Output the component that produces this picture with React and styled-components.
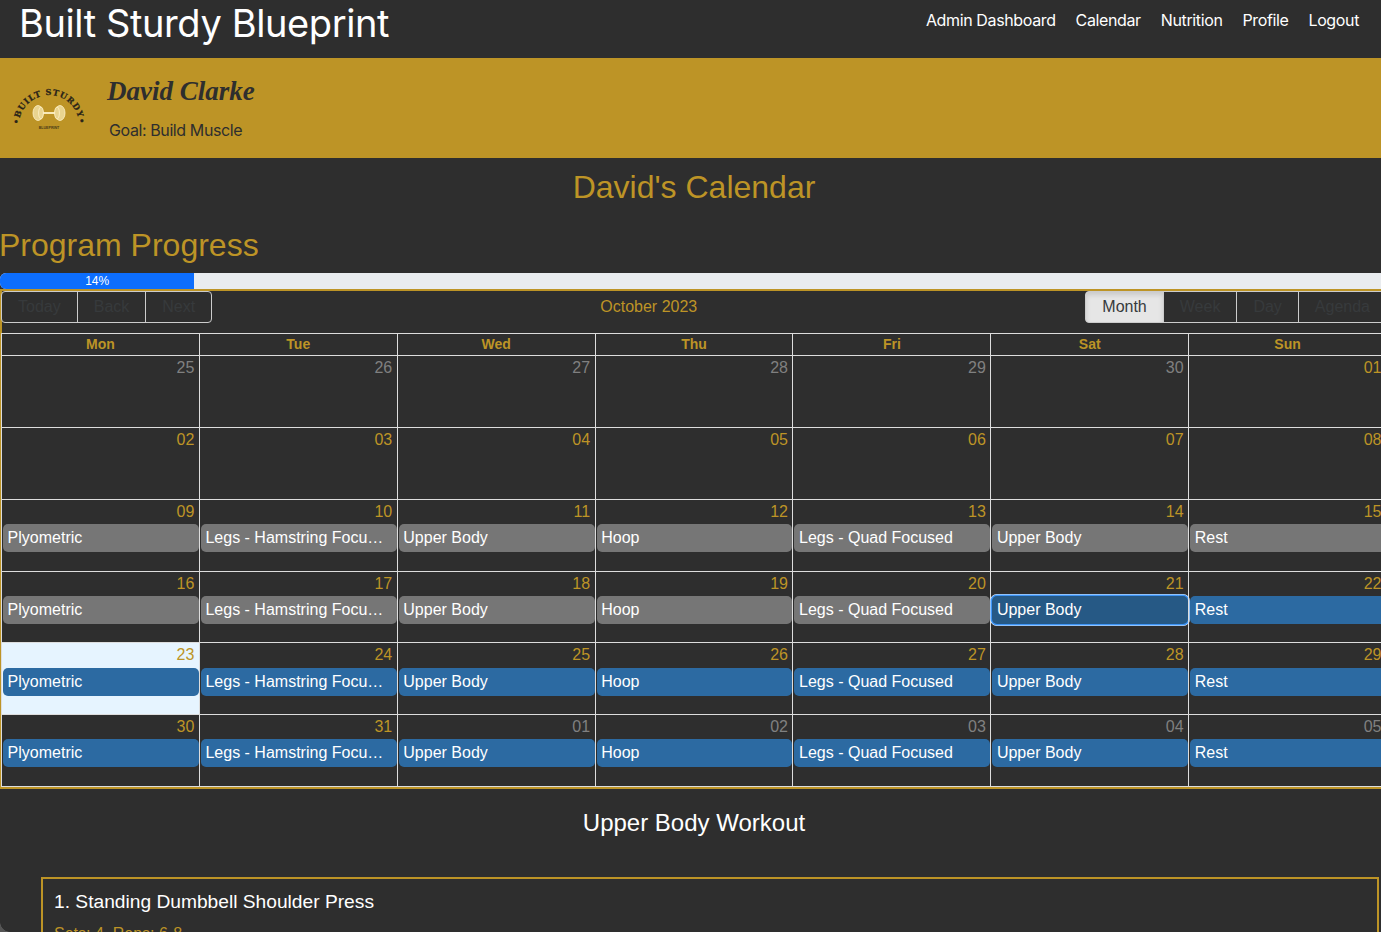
import React from 'react'
import styled, { createGlobalStyle } from 'styled-components'

const gold = '#bd9426'
const dark = '#2e2e2e'
const line = '#dddddd'
const ui = '"Inter", "Liberation Sans", sans-serif'
const arial = '"Liberation Sans", Arial, sans-serif'

const Global = createGlobalStyle`
  html, body {
    margin: 0;
    padding: 0;
    width: 1381px;
    height: 932px;
    overflow: hidden;
    background: ${dark};
  }
  * { box-sizing: border-box; }
`

const Page = styled.div`
  position: relative;
  width: 1381px;
  height: 932px;
  overflow: hidden;
  background: ${dark};
  font-family: ${ui};
`

const TopBar = styled.header`
  height: 58px;
  display: flex;
  align-items: flex-start;
  justify-content: space-between;
  padding: 0 22px 0 19px;
`

const Brand = styled.div`
  font-size: 38px;
  line-height: 47px;
  font-weight: 400;
  letter-spacing: -0.4px;
  color: #fff;
`

const Nav = styled.nav`
  display: flex;
  gap: 20px;
  padding-top: 11px;
  a {
    color: #fff;
    font-size: 16px;
    line-height: 19px;
    letter-spacing: -0.37px;
    text-decoration: none;
  }
`

const Banner = styled.section`
  height: 100px;
  background: ${gold};
  display: flex;
  padding-left: 12px;
`

const LogoWrap = styled.div`
  width: 75px;
  height: 100px;
  margin-right: 21px;
  flex: none;
`

const Athlete = styled.div`
  display: flex;
  flex-direction: column;
  color: ${dark};
`

const Name = styled.div`
  font-family: "Liberation Serif", serif;
  font-style: italic;
  font-weight: 700;
  font-size: 27px;
  line-height: 34px;
  margin: 16px 0 0 -1px;
`

const Goal = styled.div`
  font-size: 16px;
  line-height: 19px;
  letter-spacing: -0.4px;
  margin: 13px 0 0 1px;
`

const Wide = styled.main`
  width: 1388px;
  font-family: ${arial};
`

const CalendarTitle = styled.h2`
  margin: 0;
  padding-top: 10px;
  height: 70px;
  text-align: center;
  color: ${gold};
  font-size: 32px;
  line-height: 39px;
  font-weight: 400;
`

const ProgressTitle = styled.h2`
  margin: 0 0 0 -1px;
  height: 45px;
  color: ${gold};
  font-size: 32px;
  line-height: 35px;
  font-weight: 400;
`

const Progress = styled.div`
  height: 16px;
  width: 100%;
  background: #e9ecef;
  border-radius: 6px 0 0 6px;
  overflow: hidden;
  display: flex;
`

const ProgressFill = styled.div`
  background: #0d6efd;
  color: #fff;
  font-size: 12px;
  line-height: 16px;
  text-align: center;
`

const Calendar = styled.section`
  height: 500px;
  width: 1387px;
  border: 2px solid ${gold};
  border-right: none;
`

const Toolbar = styled.div`
  display: flex;
  align-items: center;
  height: 32px;
  margin-bottom: 10px;
  margin-left: -1px;
`

const ToolLabel = styled.span`
  flex: 1;
  text-align: center;
  color: ${gold};
  font-size: 16px;
`

const BtnGroup = styled.div`
  display: flex;
  flex: none;
`

const ToolBtn = styled.button`
  height: 32px;
  padding: 0 16px;
  margin: 0 0 0 -1px;
  border: 1px solid #ccc;
  background: ${p => (p.$active ? '#e6e6e6' : 'transparent')};
  box-shadow: ${p => (p.$active ? 'inset 0 3px 5px rgba(0,0,0,.125)' : 'none')};
  color: #373a3c;
  font-family: ${arial};
  font-size: 16px;
  &:first-child { margin-left: 0; border-radius: 4px 0 0 4px; }
  &:last-child { border-radius: 0 4px 4px 0; }
`

const Month = styled.div`
  width: 1386px;
  margin-left: -1px;
  border-bottom: 1px solid ${line};
`

const HeaderRow = styled.div`
  display: grid;
  grid-template-columns: repeat(7, 197.86px);
  height: 22.45px;
  border-top: 1px solid ${line};
`

const HeaderCell = styled.div`
  border-left: 1px solid ${line};
  color: ${gold};
  font-size: 14px;
  font-weight: 700;
  line-height: 21px;
  text-align: center;
`

const Week = styled.div`
  display: grid;
  grid-template-columns: repeat(7, 197.86px);
  height: 71.7px;
  border-top: 1px solid ${line};
`

const Day = styled.div`
  min-width: 0;
  border-left: 1px solid ${line};
  background: ${p => (p.$today ? '#e6f4ff' : 'transparent')};
`

const DayNum = styled.div`
  height: 24.5px;
  padding: 2px 4.5px 0 0;
  text-align: right;
  font-size: 16px;
  line-height: 19px;
  color: ${p => (p.$off ? '#808080' : gold)};
`

const eventBg = { past: '#767676', next: '#2c6aa2', selected: '#265985' }

const Event = styled.div`
  height: 28px;
  margin-left: 1px;
  padding: 0 8px 0 4.6px;
  border-radius: 5px;
  background: ${p => eventBg[p.$kind]};
  color: #fff;
  font-size: 16px;
  line-height: 27px;
  white-space: nowrap;
  overflow: hidden;
  text-overflow: ellipsis;
  ${p => p.$kind === 'selected' && 'box-shadow: 0 0 0 1.5px #3d94f6, 0 0 0 2px #e8f2fd;'}
`

const WorkoutTitle = styled.h3`
  margin: 0;
  padding-top: 19px;
  height: 88px;
  text-align: center;
  color: #fff;
  font-size: 24px;
  line-height: 29px;
  font-weight: 400;
`

const ExerciseCard = styled.article`
  width: 1338px;
  margin-left: 41px;
  height: 80px;
  border: 2px solid ${gold};
  padding: 11px 11px;
`

const ExerciseName = styled.div`
  color: #fff;
  font-size: 19.2px;
  line-height: 24px;
`

const ExerciseMeta = styled.div`
  color: ${gold};
  font-size: 16px;
  line-height: 19px;
  margin-top: 10px;
`

const WindowCorner = styled.div`
  position: absolute;
  left: 0;
  bottom: 0;
  width: 10px;
  height: 10px;
  background: radial-gradient(circle at 100% 0, transparent 9.5px, #555 10px);
`

const Logo = () => (
  <svg width="75" height="100" viewBox="0 0 75 100">
    <defs>
      <path id="logoArc" d="M7.4 72 A30 30 0 1 1 66.6 72" />
    </defs>
    <text fill="#2a2418" stroke="#2a2418" strokeWidth="0.25" fontFamily="'DejaVu Serif', serif" fontWeight="700" fontSize="8.2" letterSpacing="0.8">
      <textPath href="#logoArc" startOffset="50%" textAnchor="middle">•BUILT STURDY•</textPath>
    </text>
    <g stroke="#fff3c9" fill="none" strokeWidth="0.8">
      <path d="M30 55h13" strokeWidth="1.8" />
      <ellipse cx="26" cy="55" rx="5" ry="7.5" fill="#e9d48f" />
      <ellipse cx="29" cy="55" rx="2.4" ry="6" fill="#e9d48f" />
      <ellipse cx="48" cy="55" rx="5" ry="7.5" fill="#e9d48f" />
      <ellipse cx="45" cy="55" rx="2.4" ry="6" fill="#e9d48f" />
    </g>
    <text x="37" y="70.5" textAnchor="middle" fill="#4a3c18" fontFamily="'Liberation Sans', sans-serif" fontWeight="700" fontSize="3.6">BLUEPRINT</text>
  </svg>
)

const program = ['Plyometric', 'Legs - Hamstring Focused', 'Upper Body', 'Hoop', 'Legs - Quad Focused', 'Upper Body', 'Rest']
const dayNames = ['Mon', 'Tue', 'Wed', 'Thu', 'Fri', 'Sat', 'Sun']

const weeks = [
  { days: ['25', '26', '27', '28', '29', '30', '01'], off: 6 },
  { days: ['02', '03', '04', '05', '06', '07', '08'] },
  { days: ['09', '10', '11', '12', '13', '14', '15'], kinds: Array(7).fill('past') },
  { days: ['16', '17', '18', '19', '20', '21', '22'], kinds: ['past', 'past', 'past', 'past', 'past', 'selected', 'next'] },
  { days: ['23', '24', '25', '26', '27', '28', '29'], kinds: Array(7).fill('next'), today: 0 },
  { days: ['30', '31', '01', '02', '03', '04', '05'], kinds: Array(7).fill('next'), offFrom: 2 },
]

const isOff = (week, i) => (week.off ? i < week.off : week.offFrom ? i >= week.offFrom : false)

export default function App() {
  return (
    <Page>
      <Global />
      <TopBar>
        <Brand>Built Sturdy Blueprint</Brand>
        <Nav>
          <a href="#admin">Admin Dashboard</a>
          <a href="#calendar">Calendar</a>
          <a href="#nutrition">Nutrition</a>
          <a href="#profile">Profile</a>
          <a href="#logout">Logout</a>
        </Nav>
      </TopBar>
      <Banner>
        <LogoWrap><Logo /></LogoWrap>
        <Athlete>
          <Name>David Clarke</Name>
          <Goal>Goal: Build Muscle</Goal>
        </Athlete>
      </Banner>
      <Wide>
        <CalendarTitle>David's Calendar</CalendarTitle>
        <ProgressTitle>Program Progress</ProgressTitle>
        <Progress>
          <ProgressFill style={{ width: '14%' }}>14%</ProgressFill>
        </Progress>
        <Calendar>
          <Toolbar>
            <BtnGroup>
              <ToolBtn>Today</ToolBtn>
              <ToolBtn>Back</ToolBtn>
              <ToolBtn>Next</ToolBtn>
            </BtnGroup>
            <ToolLabel>October 2023</ToolLabel>
            <BtnGroup>
              <ToolBtn $active>Month</ToolBtn>
              <ToolBtn>Week</ToolBtn>
              <ToolBtn>Day</ToolBtn>
              <ToolBtn>Agenda</ToolBtn>
            </BtnGroup>
          </Toolbar>
          <Month>
            <HeaderRow>
              {dayNames.map(d => <HeaderCell key={d}>{d}</HeaderCell>)}
            </HeaderRow>
            {weeks.map(week => (
              <Week key={week.days[0]}>
                {week.days.map((num, i) => (
                  <Day key={num} $today={week.today === i}>
                    <DayNum $off={isOff(week, i)}>{num}</DayNum>
                    {week.kinds && <Event $kind={week.kinds[i]}>{program[i]}</Event>}
                  </Day>
                ))}
              </Week>
            ))}
          </Month>
        </Calendar>
        <WorkoutTitle>Upper Body Workout</WorkoutTitle>
        <ExerciseCard>
          <ExerciseName>1. Standing Dumbbell Shoulder Press</ExerciseName>
          <ExerciseMeta>Sets: 4, Reps: 6-8</ExerciseMeta>
        </ExerciseCard>
      </Wide>
      <WindowCorner />
    </Page>
  )
}
